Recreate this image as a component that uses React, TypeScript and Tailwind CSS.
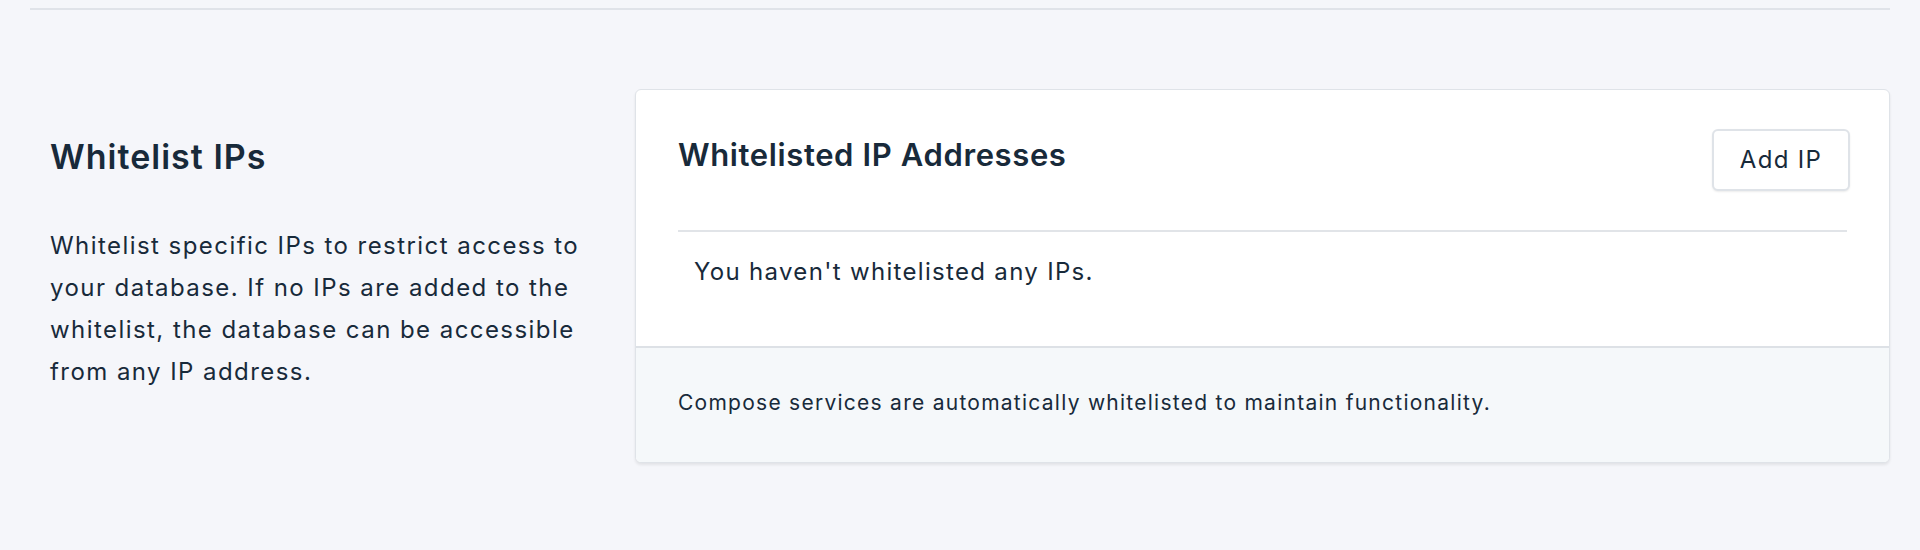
export default function App() {
  return (
    <div className="min-h-[550px] bg-[#f5f6fa] text-[#182a3a] font-['Inter',sans-serif] pt-[8px]">
      <div className="mx-[30px] border-t-2 border-[#e0e3e9]">
        <div className="flex mt-[79px]">
          {/* Left description */}
          <div className="w-[605px] pl-[20px] pt-[48px]">
            <h2 className="text-[34px] leading-[40px] font-semibold tracking-[0.03em]">Whitelist IPs</h2>
            <p className="mt-[48px] w-[565px] text-[24px] leading-[42px] tracking-[0.06em]">
              Whitelist specific IPs to restrict access to your database. If no IPs are added to the
              whitelist, the database can be accessible from any IP address.
            </p>
          </div>

          {/* Card */}
          <div className="flex-1 bg-white rounded-[6px] border border-[#dfe3e8] shadow-[0_2px_3px_rgba(0,0,0,0.08)] overflow-hidden">
            <div className="px-[42px]">
              <div className="flex justify-between items-start pt-[39px] pb-[39px] border-b-2 border-[#e1e4e8]">
                <h3 className="pt-[7px] text-[31px] leading-[38px] font-semibold tracking-[0.02em]">
                  Whitelisted IP Addresses
                </h3>
                <button className="-mr-[3px] w-[138px] h-[62px] rounded-[6px] border-2 border-[#dfe3e8] bg-white text-[24px] tracking-[0.055em] text-[#182a3a] shadow-[0_1px_2px_rgba(0,0,0,0.08)]">
                  Add IP
                </button>
              </div>
              <div className="pl-[16px] pt-[23px] pb-[57px] text-[24px] leading-[34px] tracking-[0.055em]">
                You haven't whitelisted any IPs.
              </div>
            </div>
            <div className="bg-[#f5f8fa] border-t-2 border-[#dde1e6] px-[42px] pt-[41px] pb-[45px] text-[21px] leading-[28px] tracking-[0.06em]">
              Compose services are automatically whitelisted to maintain functionality.
            </div>
          </div>
        </div>
      </div>
    </div>
  );
}
